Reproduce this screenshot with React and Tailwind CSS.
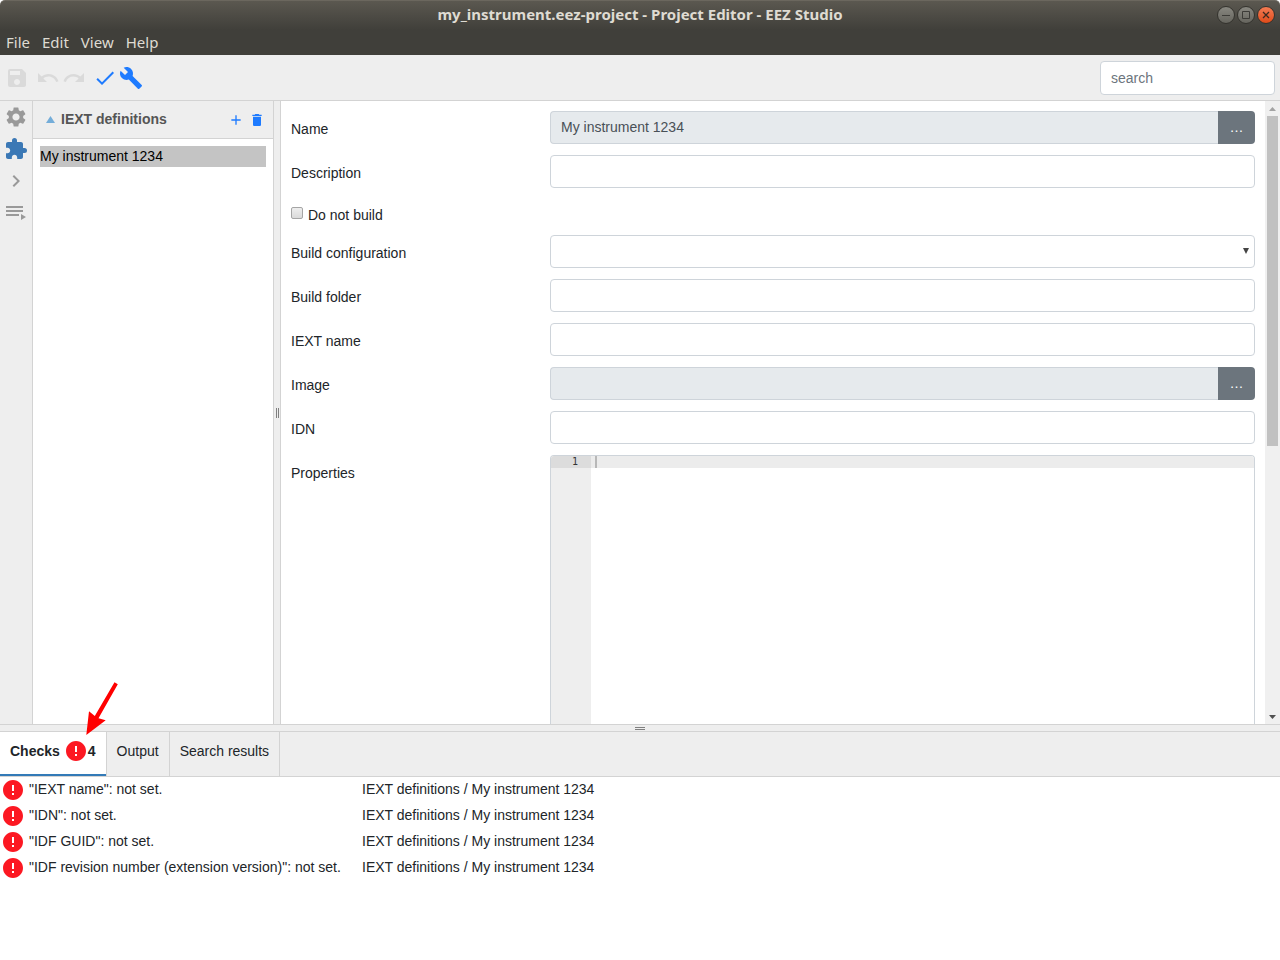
import React, { useState } from 'react';
import {
  MdAdd,
  MdBuild,
  MdCheck,
  MdDelete,
  MdError,
  MdExtension,
  MdKeyboardArrowRight,
  MdRedo,
  MdSave,
  MdSettings,
  MdUndo,
} from 'react-icons/md';

const CHECKS = ['"IEXT name": not set.', '"IDN": not set.', '"IDF GUID": not set.', '"IDF revision number (extension version)": not set.'];

const inputClass =
  'block h-[33px] w-full rounded border border-[#ced4da] bg-white px-[10px] text-sm text-[#495057] focus:outline-none';

const RunScriptIcon = () => (
  <svg viewBox="0 0 24 24" className="size-6" fill="currentColor">
    <path d="M2 5h17v2H2zM2 9h17v2H2zM2 13h13v2H2zM17 13l5 3-5 3z" />
  </svg>
);

const TitleBar = () => (
  <header className="relative flex h-[30px] shrink-0 items-center justify-center rounded-t-[5px] border-t border-[#6b675e] bg-linear-to-b from-[#5b5850] to-[#403f3a] pb-[2px] font-['Noto_Sans',sans-serif]">
    <h1 className="text-[15px] font-bold text-[#dfdbd2]">my_instrument.eez-project - Project Editor - EEZ Studio</h1>
    <div className="absolute top-[5px] right-[5px] flex gap-[2px]">
      <button aria-label="Minimize" className="flex size-[18px] items-center justify-center rounded-full border border-[#34332e] bg-linear-to-b from-[#888780] to-[#66655e] text-[#3c3b37]">
        <svg viewBox="0 0 16 16" className="size-4 shrink-0" stroke="currentColor" fill="none">
          <path d="M4 8.500h8" />
        </svg>
      </button>
      <button aria-label="Maximize" className="flex size-[18px] items-center justify-center rounded-full border border-[#34332e] bg-linear-to-b from-[#888780] to-[#66655e] text-[#3c3b37]">
        <svg viewBox="0 0 16 16" className="size-4 shrink-0" stroke="currentColor" fill="none">
          <path d="M4.500 4.500h7v7h-7z" />
        </svg>
      </button>
      <button aria-label="Close" className="flex size-[18px] items-center justify-center rounded-full border border-[#34332e] bg-linear-to-b from-[#f37b52] to-[#df4a16] text-[#3c2a20]">
        <svg viewBox="0 0 16 16" className="size-4 shrink-0" stroke="currentColor" strokeWidth="1.3" fill="none">
          <path d="M5 5l6 6M11 5l-6 6" />
        </svg>
      </button>
    </div>
  </header>
);

const MenuBar = () => (
  <nav className="flex h-[25px] shrink-0 items-center gap-3 bg-[#403f3a] px-[6px] font-['Noto_Sans',sans-serif] text-[15px] text-[#dfdbd2]">
    {['File', 'Edit', 'View', 'Help'].map((item) => (
      <button key={item}>{item}</button>
    ))}
  </nav>
);

const Toolbar = () => (
  <div className="flex h-[46px] shrink-0 items-center justify-between border-b border-[#d3d3d3] bg-[#eeeeee] px-[5px]">
    <div className="flex items-center gap-[7px] text-[#1e7bff]">
      <button aria-label="Save" disabled className="text-[#dadada]"><MdSave size={24} /></button>
      <div className="flex gap-[2px] text-[#dadada]">
        <button aria-label="Undo" disabled><MdUndo size={24} /></button>
        <button aria-label="Redo" disabled><MdRedo size={24} /></button>
      </div>
      <div className="flex gap-[2px]">
        <button aria-label="Check"><MdCheck size={24} /></button>
        <button aria-label="Build"><MdBuild size={24} /></button>
      </div>
    </div>
    <input
      type="search"
      aria-label="search"
      placeholder="search"
      className="h-[34px] w-[175px] rounded border border-[#ced4da] bg-white px-[10px] text-sm placeholder:text-[#6c757d] focus:outline-none"
    />
  </div>
);

const SideNav = () => (
  <nav className="flex w-[33px] shrink-0 flex-col border-r border-[#d3d3d3] bg-[#eeeeee] text-[#999999]">
    <button aria-label="Settings" className="flex h-8 items-center justify-center"><MdSettings size={24} /></button>
    <button aria-label="IEXT definitions" className="flex h-8 items-center justify-center text-[#3b78b5]"><MdExtension size={24} /></button>
    <button aria-label="Actions" className="flex h-8 items-center justify-center"><MdKeyboardArrowRight size={24} /></button>
    <button aria-label="Scripts" className="flex h-8 items-center justify-center"><RunScriptIcon /></button>
  </nav>
);

const DefinitionsPanel = () => (
  <aside className="flex w-[240px] shrink-0 flex-col bg-white">
    <div className="flex h-[38px] items-center border-b border-[#d3d3d3] bg-[#eeeeee] pr-2 pl-[13px]">
      <svg viewBox="0 0 9 7" className="h-[7px] w-[9px]" fill="#74add9">
        <path d="M4.500 0L9 7H0z" />
      </svg>
      <h2 className="flex-1 pb-[2px] pl-[6px] text-sm font-bold text-[#555555]">IEXT definitions</h2>
      <div className="flex gap-[5px] text-[#1e7bff]">
        <button aria-label="Add"><MdAdd size={16} /></button>
        <button aria-label="Delete"><MdDelete size={16} /></button>
      </div>
    </div>
    <ul className="p-[7px]">
      <li className="bg-[#c4c4c4] text-sm/[21px] text-black">My instrument 1234</li>
    </ul>
  </aside>
);

const Field = ({ id, label, children }) => (
  <div className="flex h-11 shrink-0 items-start">
    <label htmlFor={id} className="w-[259px] shrink-0 pt-2 text-sm/5">{label}</label>
    <div className="min-w-0 flex-1">{children}</div>
  </div>
);

const BrowseInput = ({ id, value }) => (
  <div className="flex">
    <input
      id={id}
      readOnly
      defaultValue={value}
      className="h-[33px] min-w-0 flex-1 rounded-l border border-r-0 border-[#ced4da] bg-[#e6eaed] px-[10px] pb-[2px] text-sm text-[#495057] focus:outline-none"
    />
    <button aria-label="Browse" className="h-[33px] w-[37px] rounded-r bg-[#6c757d] pb-px text-sm text-white">…</button>
  </div>
);

const PropertiesForm = () => (
  <form className="flex min-w-0 flex-1 flex-col overflow-hidden bg-white px-[10px] pt-[10px]">
    <Field id="name" label="Name"><BrowseInput id="name" value="My instrument 1234" /></Field>
    <Field id="description" label="Description"><input id="description" className={inputClass} /></Field>
    <label className="flex h-9 shrink-0 items-start text-sm/5">
      <input
        type="checkbox"
        className="mt-2 mr-[5px] size-3 appearance-none rounded-xs border border-[#a5a5a5] bg-linear-to-b from-[#eeeeee] to-[#dadada] checked:from-[#337ab7] checked:to-[#337ab7]"
      />
      <span className="pt-[6px]">Do not build</span>
    </label>
    <Field id="configuration" label="Build configuration">
      <div className="relative">
        <select id="configuration" className={`${inputClass} appearance-none`} />
        <svg viewBox="0 0 6 6" className="pointer-events-none absolute top-[13px] right-[6px] size-[6px]" fill="#444444">
          <path d="M0 0h6L3 6z" />
        </svg>
      </div>
    </Field>
    <Field id="folder" label="Build folder"><input id="folder" className={inputClass} /></Field>
    <Field id="iext" label="IEXT name"><input id="iext" className={inputClass} /></Field>
    <Field id="image" label="Image"><BrowseInput id="image" value="" /></Field>
    <Field id="idn" label="IDN"><input id="idn" className={inputClass} /></Field>
    <div className="flex min-h-0 flex-1">
      <label htmlFor="properties" className="w-[259px] shrink-0 pt-2 text-sm/5">Properties</label>
      <div className="flex min-w-0 flex-1 overflow-hidden rounded-t border border-b-0 border-[#ced4da]">
        <div className="w-10 shrink-0 bg-[#eeeeee] font-['DejaVu_Sans_Mono',monospace] text-[10px]/3 text-[#333333]">
          <div className="bg-[#dcdcdc] pr-[13px] text-right">1</div>
        </div>
        <div className="flex min-w-0 flex-1 flex-col">
          <div className="h-3 shrink-0 bg-[#ececec] pl-1">
            <div className="h-3 w-[2px] bg-[#b8b8b8]" />
          </div>
          <textarea id="properties" className="w-full flex-1 resize-none px-1 font-['DejaVu_Sans_Mono',monospace] text-xs focus:outline-none" />
        </div>
      </div>
    </div>
  </form>
);

const ScrollBar = () => (
  <div className="flex w-[15px] shrink-0 flex-col items-center bg-[#f0f0f0]">
    <svg viewBox="0 0 15 15" className="size-[15px] shrink-0" fill="#a3a3a3">
      <path d="M4 10h7L7.500 6z" />
    </svg>
    <div className="h-[330px] w-[11px] bg-[#c1c1c1]" />
    <svg viewBox="0 0 15 15" className="mt-auto size-[15px] shrink-0" fill="#505050">
      <path d="M4 6h7L7.500 10z" />
    </svg>
  </div>
);

const ErrorIcon = () => <MdError size={24} className="shrink-0 text-[#fc1822]" />;

const BottomPanel = () => {
  const [active, setActive] = useState('Checks');

  return (
    <section className="h-[228px] shrink-0 bg-white">
      <div role="tablist" className="flex h-[45px] border-b border-[#d3d3d3] bg-[#eeeeee] text-sm/5">
        {['Checks', 'Output', 'Search results'].map((tab) => (
          <button
            key={tab}
            role="tab"
            aria-selected={active === tab}
            onClick={() => setActive(tab)}
            className={`flex h-11 items-start border-r border-[#d3d3d3] px-[10px] pt-[9px] ${
              active === tab ? 'bg-white font-bold shadow-[inset_0_-2px_0_#337ab7]' : ''
            }`}
          >
            {tab}
            {tab === 'Checks' && (
              <span className="flex pl-1">
                <span className="-my-0.5"><ErrorIcon /></span>
                4
              </span>
            )}
          </button>
        ))}
      </div>
      <table className="text-sm/6">
        <tbody>
          {CHECKS.map((message) => (
            <tr key={message} className="h-[26px] align-top">
              <td className="w-[362px] pl-px">
                <div className="flex gap-1">
                  <span className="pt-px"><ErrorIcon /></span>
                  {message}
                </div>
              </td>
              <td>IEXT definitions / My instrument 1234</td>
            </tr>
          ))}
        </tbody>
      </table>
    </section>
  );
};

const App = () => (
  <div className="relative flex h-screen flex-col overflow-hidden bg-white font-['Liberation_Sans',Arial,sans-serif] text-[#212529]">
    <TitleBar />
    <MenuBar />
    <Toolbar />
    <main className="flex min-h-0 flex-1">
      <SideNav />
      <DefinitionsPanel />
      <div className="flex w-2 shrink-0 cursor-col-resize items-center justify-center border-x border-[#d3d3d3] bg-[#eeeeee]">
        <div className="h-[10px] w-[3px] border-x border-[#808080]" />
      </div>
      <PropertiesForm />
      <ScrollBar />
    </main>
    <div className="flex h-2 shrink-0 cursor-row-resize items-center justify-center border-y border-[#d3d3d3] bg-[#eeeeee]">
      <div className="h-[3px] w-[10px] border-y border-[#808080]" />
    </div>
    <BottomPanel />

    {/* callout pointing at the number of failed checks */}
    <svg viewBox="0 0 32 54" className="pointer-events-none absolute bottom-[224px] left-[86px] h-[54px] w-8" fill="#ff0000">
      <path d="M0.300 53L3 29.300l5.800 4.700L28.500 0.300l3.300 2L12.500 36.300l7.200 2z" />
    </svg>
  </div>
);

export default App;
